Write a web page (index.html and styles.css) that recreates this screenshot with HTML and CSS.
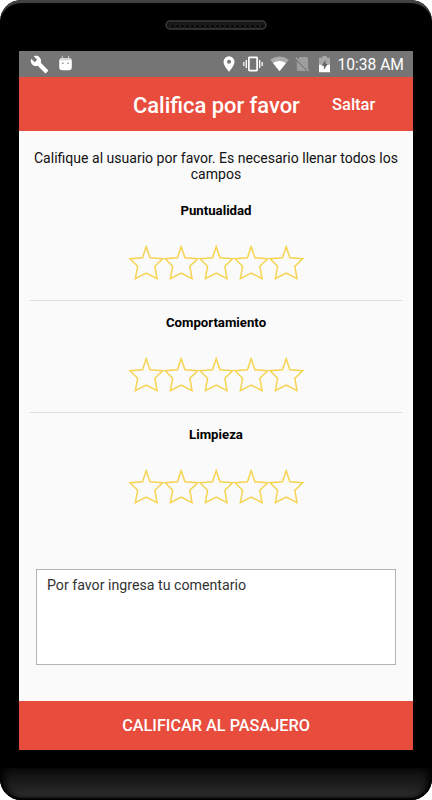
FILE: index.html
```html
<!DOCTYPE html>
<html lang="es">
  <head>
    <meta charset="utf-8">
    <title>Califica por favor</title>
    <link rel="stylesheet" href="styles.css">
  </head>
  <body>
    <svg width="0" height="0" class="defs">
      <defs>
        <symbol id="star" viewBox="0 0 35 36">
          <path d="M17.2 1.7 L20.9 12.7 L33.7 13.7 L25.8 21.3 L28 33.7 L17.2 28 L6.4 33.7 L8.6 21.3 L.9 13.7 L13.5 12.7 Z" />
        </symbol>
        <pattern id="holes" width="5" height="4" patternUnits="userSpaceOnUse">
          <circle cx="2.5" cy="2" r="1.7" fill="#000" stroke="#333" stroke-width=".6" />
        </pattern>
      </defs>
    </svg>

    <div class="phone">
      <div class="phone-top">
        <svg class="speaker" width="102" height="10" viewBox="0 0 102 10">
          <rect x="1" y="1" width="100" height="8" rx="4" fill="#141414" stroke="#3b3b3b" stroke-width="1.5" />
          <rect x="4" y="3" width="94" height="4" fill="url(#holes)" />
        </svg>
      </div>

      <div class="screen">
        <div class="status-bar">
          <svg class="wrench" width="19" height="19" viewBox="0 0 24 24">
            <path d="M22.7 19l-9.1-9.1c.9-2.3.4-5-1.5-6.9-2-2-5-2.4-7.4-1.3L9 6 6 9 1.6 4.7C.4 7.1.9 10.1 2.9 12.1c1.9 1.9 4.6 2.4 6.9 1.5l9.1 9.1c.4.4 1 .4 1.4 0l2.3-2.3c.5-.4.5-1.1.1-1.4z" />
          </svg>
          <svg class="android" width="13" height="16" viewBox="0 0 13 16">
            <path d="M3 .7l1 3M10 .7l-1 3" stroke="#ddd" stroke-width=".9" />
            <path d="M.2 6Q.2 3 3.2 3h6.6q3 0 3 3v6.2q0 3-3 3H3.2q-3 0-3-3z" />
            <path d="M1 5.2Q1.3 3 3.5 3h6q2.2 0 2.5 2.2z" fill="#d4d4d4" />
            <circle cx="3.9" cy="8.2" r=".8" fill="#777" />
            <circle cx="9.1" cy="8.2" r=".8" fill="#777" />
          </svg>
          <span class="spacer"></span>
          <svg class="pin" width="12" height="16" viewBox="0 0 12 16">
            <path fill-rule="evenodd" d="M6 .3A5.5 5.5 0 0 0 .5 5.8C.5 9.8 6 15.7 6 15.7s5.5-5.9 5.5-9.9A5.5 5.5 0 0 0 6 .3zm0 7.4a2 2 0 1 1 0-4 2 2 0 0 1 0 4z" />
          </svg>
          <svg class="vibrate" width="20" height="16" viewBox="0 0 20 16">
            <rect x="5.9" y="1.4" width="8.2" height="13.2" rx=".5" fill="none" stroke="#fff" stroke-width="1.7" />
            <path d="M.8 6v4M3.3 4v8M16.7 4v8M19.2 6v4" stroke="#fff" stroke-width="1.3" />
          </svg>
          <svg class="wifi" width="19" height="16" viewBox="0 0 19 16">
            <path d="M9.5 15.3L.2 3.8Q9.5-2.8 18.8 3.8z" opacity=".4" />
            <path d="M9.5 15.3L3 7.1Q9.5 2.8 16 7.1z" />
          </svg>
          <svg class="no-sim" width="15" height="16" viewBox="0 0 15 16">
            <path d="M4.5 1H11q2 0 2 2v11L3.4 3.4zM1.8 4.9L11.4 15H3.5q-1.7 0-1.7-1.7z" opacity=".3" />
            <path d="M.7 1.5l13 13.5" stroke="#a5a5a5" stroke-width="1.1" />
          </svg>
          <svg class="battery" width="11" height="17" viewBox="0 0 11 17">
            <path d="M3.5 0h4v1.8H11V9H0V1.8h3.5z" opacity=".38" />
            <path d="M0 8.8h11v7.4H0z" />
            <path d="M6.6 4.1L2.5 9.7h2.4v4L8.8 8H6.6z" fill="#666" />
          </svg>
          <span class="time">10:38 AM</span>
        </div>

        <div class="header">
          <h1>Califica por favor</h1>
          <a class="skip">Saltar</a>
        </div>

        <div class="content">
          <p class="intro">Califique al usuario por favor. Es necesario llenar todos los campos</p>

          <div class="rating">
            <h2>Puntualidad</h2>
            <div class="stars">
              <svg><use href="#star" /></svg>
              <svg><use href="#star" /></svg>
              <svg><use href="#star" /></svg>
              <svg><use href="#star" /></svg>
              <svg><use href="#star" /></svg>
            </div>
          </div>

          <div class="rating">
            <h2>Comportamiento</h2>
            <div class="stars">
              <svg><use href="#star" /></svg>
              <svg><use href="#star" /></svg>
              <svg><use href="#star" /></svg>
              <svg><use href="#star" /></svg>
              <svg><use href="#star" /></svg>
            </div>
          </div>

          <div class="rating">
            <h2>Limpieza</h2>
            <div class="stars">
              <svg><use href="#star" /></svg>
              <svg><use href="#star" /></svg>
              <svg><use href="#star" /></svg>
              <svg><use href="#star" /></svg>
              <svg><use href="#star" /></svg>
            </div>
          </div>

          <div class="comment">Por favor ingresa tu comentario</div>
        </div>

        <div class="submit">CALIFICAR AL PASAJERO</div>
      </div>

      <div class="phone-bottom"></div>
    </div>
  </body>
</html>
```

FILE: styles.css
```css
* { box-sizing: border-box; }
body {
  margin: 0;
  background: #fff;
  font-family: Roboto, "Liberation Sans", sans-serif;
}
h1, h2, p { margin: 0; }
.defs { display: block; }

.phone {
  width: 432px; height: 800px;
  display: flex;
  flex-direction: column;
  align-items: center;
  background: #000;
  border-radius: 21px;
  overflow: hidden;
}
.phone-top {
  width: 100%; height: 51px;
  flex: none;
  display: flex;
  justify-content: center;
  border-radius: 21px 21px 0 0;
  box-shadow: inset 0 4px 1px -1px #444;
}
.speaker { margin-top: 20px; }
.phone-bottom {
  width: 100%; height: 32px;
  margin-top: 18px;
  border-radius: 0 0 21px 21px;
  background: linear-gradient(#0c0c0c, #282828 80%);
  box-shadow: inset 8px 0 8px -4px #000, inset -8px 0 8px -4px #000, inset 0 -2px 2px #000;
}

.screen {
  width: 394px; height: 699px;
  flex: none;
  display: flex;
  flex-direction: column;
  background: #fafafa;
}
.status-bar {
  height: 26px;
  display: flex;
  align-items: center;
  padding: 0 9px 0 11px;
  background: #757575;
  color: #fff;
}
.status-bar svg { fill: #fff; flex: none; }
.spacer { flex: 1; }
.android { margin-left: 10px; margin-top: -2px; }
.vibrate { margin-left: 8px; }
.wifi { margin-left: 7px; }
.no-sim { margin-left: 6px; }
.battery { margin-left: 9px; }
.time {
  width: 67px;
  margin-left: 7px;
  padding-top: 2px;
  font-size: 15.6px;
  line-height: 24px;
  text-align: right;
  white-space: nowrap;
}

.header {
  height: 54px;
  display: flex;
  align-items: center;
  padding: 2px 0 0 114px;
  background: #e84c3d;
  color: #fff;
}
.header h1 { width: 199px; font-size: 21.9px; font-weight: 500; white-space: nowrap; }
.skip { padding-bottom: 2px; font-size: 16.5px; font-weight: 500; }

.content {
  flex: 1;
  padding: 19px 11px 0;
}
.intro {
  font-size: 14.05px;
  line-height: 16px;
  text-align: center;
  color: #111;
}
.rating {
  height: 112px;
  padding-top: 12px;
  border-bottom: 1px solid #ddd;
}
.intro + .rating { height: 119px; padding-top: 19px; }
.rating:nth-of-type(3) { border-bottom: none; }
.rating h2 {
  font-size: 13.2px;
  line-height: 19px;
  text-align: center;
  color: #000;
}
.stars {
  display: flex;
  justify-content: center;
  margin-top: 25px;
}
.stars svg {
  width: 35px; height: 36px;
  fill: none;
  stroke: #f6d351;
  stroke-width: 1.5;
}
.comment {
  height: 96px;
  margin: 44px 6px 0;
  padding: 7px 10px;
  border: 1px solid #b3b3b3;
  background: #fff;
  font-size: 14.2px;
  line-height: 17px;
  color: #333;
}

.submit {
  height: 49px;
  background: #e84c3d;
  color: #fff;
  font-size: 16.25px;
  font-weight: 500;
  line-height: 49px;
  text-align: center;
}
```
